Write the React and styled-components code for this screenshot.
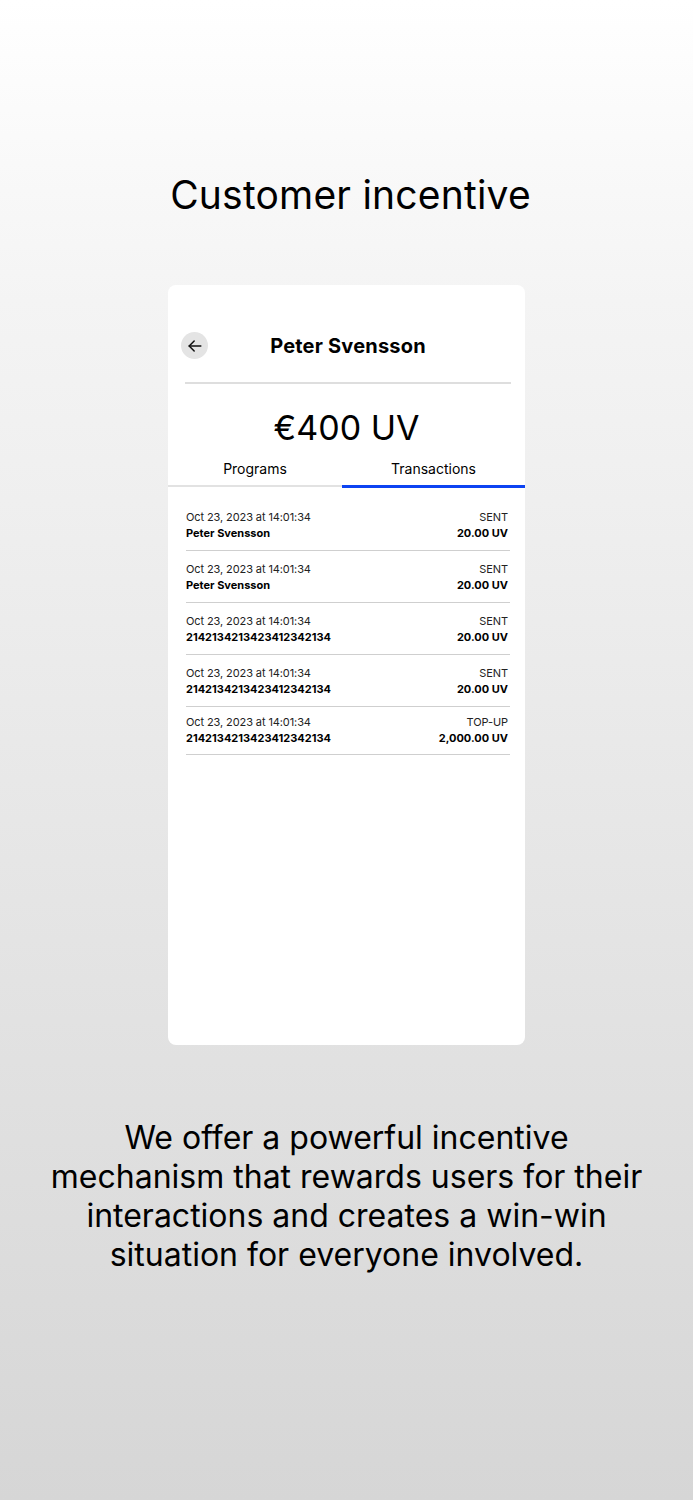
import React from "react";
import styled, { createGlobalStyle } from "styled-components";

const Global = createGlobalStyle`
  html, body { margin: 0; padding: 0; }
  body { font-family: "Inter", "Noto Sans", sans-serif; color: #000; }
`;

const Page = styled.div`
  width: 693px;
  height: 1500px;
  background: linear-gradient(180deg, #ffffff 0%, #f4f4f4 20%, #d6d6d6 100%);
  display: flex;
  flex-direction: column;
  align-items: center;
  padding-top: 171px;
  box-sizing: border-box;
`;

const Title = styled.h1`
  margin: 0;
  padding-left: 8px;
  font-size: 39px;
  line-height: 48px;
  font-weight: 400;
  letter-spacing: 0.2px;
`;

const Card = styled.div`
  margin-top: 66px;
  width: 357px;
  height: 760px;
  background: #fff;
  border-radius: 8px;
  display: flex;
  flex-direction: column;
`;

const Header = styled.div`
  display: grid;
  grid-template-columns: 27px 1fr 27px;
  align-items: center;
  padding: 47px 14px 0 13px;
`;

const BackButton = styled.button`
  width: 27px;
  height: 27px;
  border-radius: 50%;
  border: none;
  background: #e4e4e4;
  padding: 0;
  display: flex;
  align-items: center;
  justify-content: center;
`;

const Name = styled.div`
  text-align: center;
  font-size: 20px;
  font-weight: 700;
  letter-spacing: 0.2px;
  padding-left: 4px;
`;

const Divider = styled.div`
  margin: 23px 14px 0 17px;
  height: 2px;
  background: #dedede;
`;

const Amount = styled.div`
  text-align: center;
  font-size: 34px;
  line-height: 40px;
  margin-top: 24px;
`;

const Tabs = styled.div`
  display: grid;
  grid-template-columns: 174px 1fr;
  margin-top: 11px;
`;

const Tab = styled.div`
  text-align: center;
  font-size: 14px;
  line-height: 20px;
  padding: 0 0 6px;
  border-bottom: ${(p) => (p.$active ? "3px solid #0d43f2" : "2px solid #e2e2e2")};
  margin-bottom: ${(p) => (p.$active ? "0" : "1px")};
`;

const List = styled.div`
  display: flex;
  flex-direction: column;
  padding: 11px 15px 0 18px;
`;

const Row = styled.div`
  display: flex;
  justify-content: space-between;
  padding: ${(p) => (p.$tight ? "7px 2px 8px 0" : "10px 2px 9px 0")};
  border-bottom: 1px solid #cfcfcf;
  font-size: 11px;
  line-height: 16px;
`;

const Col = styled.div`
  display: flex;
  flex-direction: column;
  align-items: ${(p) => (p.$right ? "flex-end" : "flex-start")};
`;

const Light = styled.span`
  color: #222;
  letter-spacing: -0.1px;
`;

const Strong = styled.span`
  font-weight: 700;
`;

const Text = styled.p`
  margin: 73px 0 0;
  text-align: center;
  font-size: 32px;
  line-height: 39px;
  font-weight: 400;
`;

const rows = [
  { who: "Peter Svensson", kind: "SENT", amt: "20.00 UV" },
  { who: "Peter Svensson", kind: "SENT", amt: "20.00 UV" },
  { who: "2142134213423412342134", kind: "SENT", amt: "20.00 UV" },
  { who: "2142134213423412342134", kind: "SENT", amt: "20.00 UV" },
  { who: "2142134213423412342134", kind: "TOP-UP", amt: "2,000.00 UV", tight: true },
];

export default function App() {
  return (
    <Page>
      <Global />
      <Title>Customer incentive</Title>
      <Card>
        <Header>
          <BackButton>
            <svg width="20" height="20" viewBox="0 0 24 24" fill="none" stroke="#111" strokeWidth="1.8" strokeLinecap="round" strokeLinejoin="round">
              <path d="M19 12H5" />
              <path d="M11 6l-6 6 6 6" />
            </svg>
          </BackButton>
          <Name>Peter Svensson</Name>
          <span />
        </Header>
        <Divider />
        <Amount>€400 UV</Amount>
        <Tabs>
          <Tab>Programs</Tab>
          <Tab $active>Transactions</Tab>
        </Tabs>
        <List>
          {rows.map((r, i) => (
            <Row key={i} $tight={r.tight}>
              <Col>
                <Light>Oct 23, 2023 at 14:01:34</Light>
                <Strong>{r.who}</Strong>
              </Col>
              <Col $right>
                <Light>{r.kind}</Light>
                <Strong>{r.amt}</Strong>
              </Col>
            </Row>
          ))}
        </List>
      </Card>
      <Text>
        We offer a powerful incentive
        <br />
        mechanism that rewards users for their
        <br />
        interactions and creates a win-win
        <br />
        situation for everyone involved.
      </Text>
    </Page>
  );
}
